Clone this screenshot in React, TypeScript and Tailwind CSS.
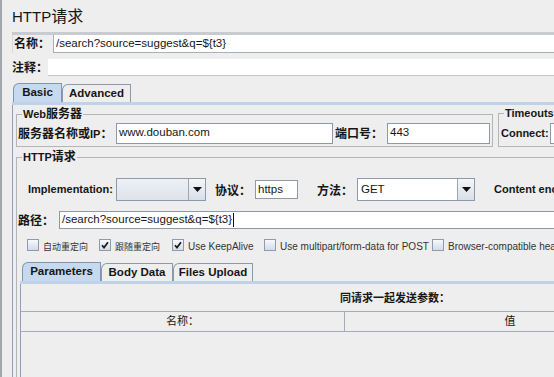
import React from "react";

const CJK_RE = /([\u3000-\u9fff\uff00-\uffef]+)/;

// CJK runs a touch larger than the latin ones, like the Swing labels
const Txt = ({ text, cjk = "text-[12px]", latin = "text-[11px]" }: { text: string; cjk?: string; latin?: string }) => (
    <>
        {text.split(CJK_RE).map((p, i) =>
            p ? (
                <span key={i} className={CJK_RE.test(p) ? cjk : latin}>
                    {p}
                </span>
            ) : null
        )}
    </>
);

const Input = ({ value = "", className = "" }: { value?: string; className?: string }) => (
    <div className={`shrink-0 bg-white border border-[#8d9aab] flex items-center pl-[2px] text-[11.5px] ${className}`}>
        {value}
    </div>
);

const Combo = ({ value = "", white = false, className = "" }: { value?: string; white?: boolean; className?: string }) => (
    <div className={`shrink-0 flex h-[23px] border border-[#8d9aab] ${className}`}>
        <div
            className={`flex-1 flex items-center pl-[3px] text-[11.5px] ${
                white ? "bg-white" : "bg-linear-to-b from-[#edf1f5] to-[#dde3ea]"
            }`}
        >
            {value}
        </div>
        <div className="w-[17px] border-l border-[#9aa6b5] bg-linear-to-b from-[#f4f7fa] to-[#d8dfe7] flex items-center justify-center">
            <svg width="9" height="5" viewBox="0 0 9 5">
                <path d="M0 0h9L4.5 5z" fill="#111" />
            </svg>
        </div>
    </div>
);

const Check = ({ label, checked = false, className = "" }: { label: string; checked?: boolean; className?: string }) => (
    <div className={`shrink-0 flex items-center ${className}`}>
        <div className="w-[12px] h-[12px] border border-[#8b9bb0] bg-linear-to-b from-[#f7f9fc] to-[#d3dbe6] flex items-center justify-center">
            {checked && (
                <svg width="8" height="8" viewBox="0 0 8 8">
                    <path d="M1 4.2 L3 6.6 L7 1.2" stroke="#1a1a1a" strokeWidth="1.7" fill="none" />
                </svg>
            )}
        </div>
        <span className="ml-[4px] text-[#333]">
            <Txt text={label} cjk="text-[9px]" latin="text-[10px]" />
        </span>
    </div>
);

const Tab = ({ label, selected = false, className = "" }: { label: string; selected?: boolean; className?: string }) => (
    <div
        className={`shrink-0 flex items-center justify-center font-bold text-[11.5px] border border-b-0 rounded-tl-[6px] ${
            selected ? "h-[19px] bg-[#c6d9ee] border-[#7f95b0]" : "h-[18px] bg-[#eeeeee] border-[#8a99ab]"
        } ${className}`}
    >
        {label}
    </div>
);

export default function App() {
    return (
        <div className="w-[554px] h-[377px] overflow-hidden bg-[#eeeeee] border-l-2 border-[#a2a7ad] text-[#161616] leading-none font-['Liberation_Sans','Noto_Sans_CJK_SC',sans-serif]">
            {/* Title */}
            <div className="h-[32px] pl-[10px] pt-[9px]">
                <Txt text="HTTP请求" cjk="text-[16px]" latin="text-[15px]" />
            </div>

            {/* Name */}
            <div className="ml-[10px] flex h-[21px] border-t-[3px] border-[#c8ccd1]">
                <div className="w-[41px] shrink-0 flex items-center pl-[1px] border-l border-[#d6dae0] font-bold">
                    <Txt text="名称：" />
                </div>
                <div className="flex-1 bg-white border-l border-b border-[#a7b1be] flex items-center pl-[2px] text-[11.5px]">
                    /search?source=suggest&amp;q=${"{"}t3{"}"}
                </div>
            </div>

            {/* Comment */}
            <div className="mt-[6px] ml-[10px] flex h-[17px]">
                <div className="w-[36px] shrink-0 flex items-center font-bold">
                    <Txt text="注释：" />
                </div>
                <div className="flex-1 bg-white border-b border-[#c4c4c4]" />
            </div>

            {/* Outer tabs */}
            <div className="mt-[7px] ml-[11px] flex items-end h-[19px]">
                <Tab label="Basic" selected className="w-[49px]" />
                <Tab label="Advanced" className="w-[69px]" />
            </div>
            <div className="ml-[10px] h-[3px] bg-[#bfd2e9]" />

            {/* Basic panel */}
            <div className="ml-[10px] border-l border-[#8ea1b9] pl-[3px] pt-[2px] h-[300px]">
                <div className="flex items-start">
                    <fieldset className="shrink-0 w-[477px] border border-[#b5b5b5] px-[1px] pb-[2px]">
                        <legend className="ml-[4px] px-[1px] h-[14px] flex items-center font-bold">
                            <Txt text="Web服务器" />
                        </legend>
                        <div className="mt-[1px] flex items-center h-[22px]">
                            <div className="w-[98px] shrink-0 font-bold">
                                <Txt text="服务器名称或IP：" />
                            </div>
                            <Input value="www.douban.com" className="w-[217px] h-[21px]" />
                            <div className="ml-[2px] w-[52px] shrink-0 font-bold">
                                <Txt text="端口号：" />
                            </div>
                            <Input value="443" className="w-[103px] h-[21px]" />
                        </div>
                    </fieldset>
                    <fieldset className="shrink-0 ml-[5px] w-[130px] border border-[#b5b5b5] px-[1px] pb-[2px]">
                        <legend className="ml-[4px] px-[1px] h-[13px] flex items-center font-bold text-[11px]">
                            Timeouts
                        </legend>
                        <div className="mt-[2px] flex items-center h-[22px] pl-[1px]">
                            <div className="w-[49px] shrink-0 font-bold text-[11px]">Connect:</div>
                            <Input className="w-[60px] h-[21px]" />
                        </div>
                    </fieldset>
                </div>

                {/* HTTP request */}
                <fieldset className="mt-[3px] w-[720px] border border-[#b5b5b5] px-[1px] pb-[4px]">
                    <legend className="ml-[4px] px-[1px] h-[14px] flex items-center font-bold">
                        <Txt text="HTTP请求" />
                    </legend>

                    <div className="mt-[14px] flex items-center h-[23px] pl-[10px]">
                        <div className="w-[88px] shrink-0 font-bold text-[11px]">Implementation:</div>
                        <Combo className="w-[90px]" />
                        <div className="ml-[9px] w-[40px] shrink-0 font-bold">
                            <Txt text="协议：" />
                        </div>
                        <Input value="https" className="w-[43px] h-[19px]" />
                        <div className="ml-[19px] w-[40px] shrink-0 font-bold">
                            <Txt text="方法：" />
                        </div>
                        <Combo value="GET" white className="w-[118px]" />
                        <div className="ml-[19px] shrink-0 font-bold text-[11px]">Content encoding:</div>
                    </div>

                    <div className="mt-[10px] flex items-center h-[18px]">
                        <div className="w-[41px] shrink-0 font-bold">
                            <Txt text="路径：" />
                        </div>
                        <div className="flex-1 h-[18px] bg-white border border-[#8d9aab] flex items-center pl-[2px] text-[11.5px]">
                            /search?source=suggest&amp;q=${"{"}t3{"}"}
                            <span className="ml-px w-px h-[14px] bg-[#111]" />
                        </div>
                    </div>

                    <div className="mt-[10px] flex items-center h-[12px] pl-[9px]">
                        <Check label="自动重定向" className="w-[72px]" />
                        <Check label="跟随重定向" checked className="w-[73px]" />
                        <Check label="Use KeepAlive" checked className="w-[92px]" />
                        <Check label="Use multipart/form-data for POST" className="w-[168px]" />
                        <Check label="Browser-compatible headers" className="w-[200px]" />
                    </div>

                    {/* Inner tabs */}
                    <div className="mt-[11px] ml-[2px]">
                        <div className="flex items-end h-[19px] pl-[2px]">
                            <Tab label="Parameters" selected className="w-[79px]" />
                            <Tab label="Body Data" className="w-[72px]" />
                            <Tab label="Files Upload" className="w-[80px]" />
                        </div>
                        <div className="h-[3px] bg-[#bfd2e9]" />
                        <div className="border-l border-[#8ea1b9] h-[120px]">
                            <div className="pt-[8px] ml-[319px] h-[21px] font-bold flex items-center">
                                <Txt text="同请求一起发送参数：" cjk="text-[11px]" />
                            </div>
                            <div className="mt-[6px] flex h-[21px] border-t border-b border-[#a3adb9]">
                                <div className="w-[324px] shrink-0 border-r border-[#a3adb9] flex items-center justify-center text-[11px]">
                                    名称：
                                </div>
                                <div className="w-[330px] shrink-0 flex items-center justify-center text-[11px]">值</div>
                            </div>
                        </div>
                    </div>
                </fieldset>
            </div>
        </div>
    );
}
